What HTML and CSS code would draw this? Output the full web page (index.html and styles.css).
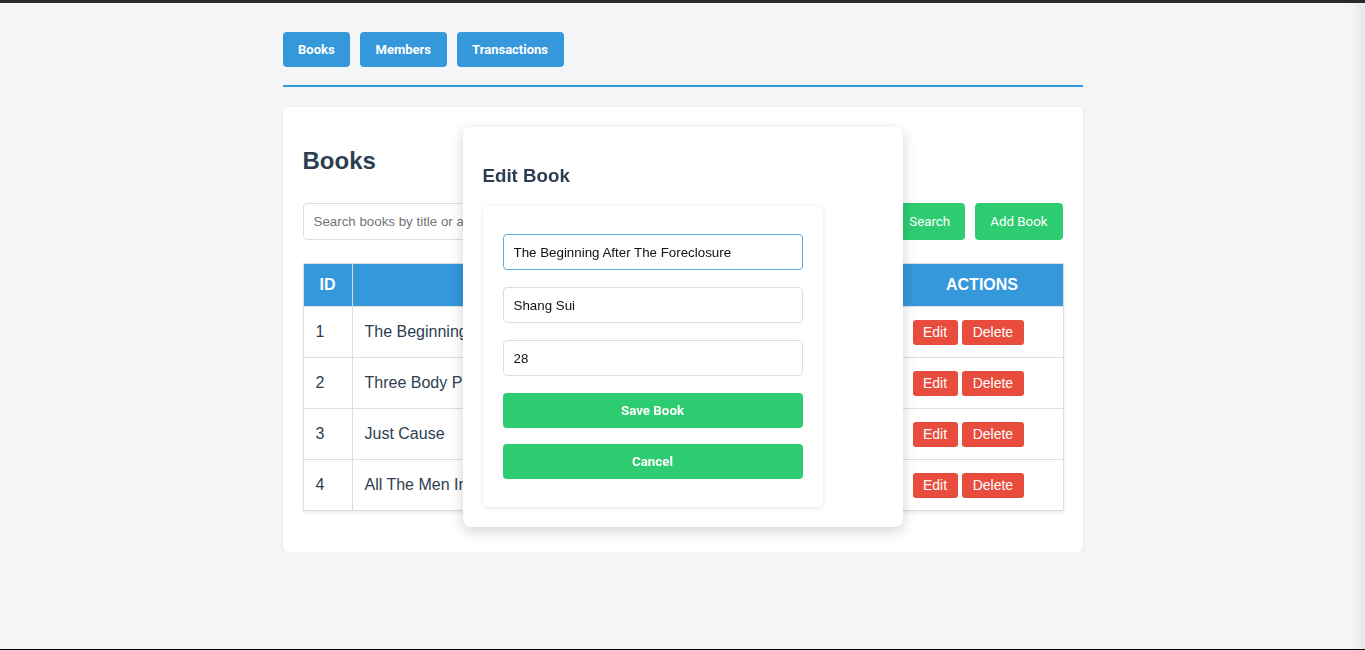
FILE: index.html
```html
<!DOCTYPE html>
<html lang="en">
<head>
<meta charset="utf-8">
<title>Library</title>
<link rel="stylesheet" href="styles.css">
</head>
<body>
<div class="topbar"></div>
<div class="container">
  <nav class="nav">
    <button class="nav-btn">Books</button>
    <button class="nav-btn">Members</button>
    <button class="nav-btn">Transactions</button>
  </nav>
  <section class="card">
    <h2 class="card-title">Books</h2>
    <div class="search-row">
      <input class="search-input" type="text" placeholder="Search books by title or author...">
      <button class="green-btn">Search</button>
      <button class="green-btn">Add Book</button>
    </div>
    <table class="books">
      <colgroup>
        <col class="c-id"><col class="c-title"><col class="c-author"><col class="c-qty"><col class="c-actions">
      </colgroup>
      <thead>
        <tr><th>ID</th><th>TITLE</th><th>AUTHOR</th><th>QTY</th><th>ACTIONS</th></tr>
      </thead>
      <tbody>
        <tr><td>1</td><td>The Beginning After The Foreclosure</td><td>Shang Sui</td><td>28</td><td><div class="acts"><button class="red-btn">Edit</button><button class="red-btn">Delete</button></div></td></tr>
        <tr><td>2</td><td>Three Body Problem</td><td>Liu Cixin</td><td>12</td><td><div class="acts"><button class="red-btn">Edit</button><button class="red-btn">Delete</button></div></td></tr>
        <tr><td>3</td><td>Just Cause</td><td>Mo Yan</td><td>7</td><td><div class="acts"><button class="red-btn">Edit</button><button class="red-btn">Delete</button></div></td></tr>
        <tr><td>4</td><td>All The Men In The World</td><td>Yu Hua</td><td>5</td><td><div class="acts"><button class="red-btn">Edit</button><button class="red-btn">Delete</button></div></td></tr>
      </tbody>
    </table>
  </section>
</div>

<div class="modal">
  <h3 class="modal-title">Edit Book</h3>
  <form class="modal-form">
    <input class="field focused" type="text" value="The Beginning After The Foreclosure">
    <input class="field" type="text" value="Shang Sui">
    <input class="field" type="text" value="28">
    <button type="button" class="wide-btn save">Save Book</button>
    <button type="button" class="wide-btn cancel">Cancel</button>
  </form>
</div>
<div class="edge-shade"></div>
<div class="bottom-line"></div>
</body>
</html>
```

FILE: styles.css
```css
* { box-sizing: border-box; }

body {
  margin: 0;
  background: #f4f5f7;
  font-family: "Liberation Sans", Arial, sans-serif;
  color: #2c3e50;
}

.topbar {
  height: 3px;
  background: #2b2b2b;
}

.container {
  width: 800px;
  margin: 0 auto;
  padding-top: 29px;
}

.nav {
  display: flex;
  gap: 10px;
  padding-bottom: 18px;
  border-bottom: 2px solid #3498db;
  margin-bottom: 20px;
}

.nav-btn {
  height: 35px;
  padding: 0 15.5px;
  border: none;
  border-radius: 4px;
  background: #3498db;
  color: #fff;
  font-family: Roboto, "Liberation Sans", sans-serif;
  font-weight: 700;
  font-size: 13px;
}

.card {
  background: #fff;
  border-radius: 6px;
  padding: 20px 20px 20px;
  box-shadow: 0 1px 4px rgba(0, 0, 0, 0.06);
}

.card-title {
  font-size: 24px;
  font-weight: 700;
  margin: 20px 0 28px;
  color: #2c3e50;
}

.search-row {
  display: flex;
  gap: 10px;
  margin-bottom: 23px;
}

.search-input {
  flex: 1;
  height: 37px;
  padding: 0 10px;
  border: 1px solid #ddd;
  border-radius: 4px;
  font-family: "Liberation Sans", Arial, sans-serif;
  font-size: 13.33px;
  color: #333;
}
.search-input::placeholder { color: #757575; }

.green-btn {
  height: 37px;
  padding: 0 15px;
  border: none;
  border-radius: 4px;
  background: #2ecc71;
  color: #fff;
  font-family: Roboto, "Liberation Sans", sans-serif;
  font-size: 13.33px;
}

.books {
  width: 100%;
  border-collapse: collapse;
  border: 1px solid #ddd;
  box-shadow: 0 2px 3px rgba(0, 0, 0, 0.08);
  margin-bottom: 21px;
  table-layout: fixed;
}
.c-id { width: 49px; }
.c-title { width: 300px; }
.c-author { width: 150px; }
.c-qty { width: 99px; }
.c-actions { width: 162px; }

.books th {
  background: #3498db;
  color: #fff;
  font-size: 16px;
  font-weight: 700;
  height: 43px;
  padding: 0 12px;
  text-align: center;
  border: 1px solid #ddd;
  border-top: none;
}
.books td {
  height: 51px;
  padding: 0 12px;
  font-size: 16px;
  color: #2c3e50;
  border: 1px solid #ddd;
  white-space: nowrap;
  overflow: hidden;
}
.books td:last-child { border-left: none; padding-left: 11px; }

.acts {
  display: flex;
  gap: 4px;
}

.red-btn {
  height: 25px;
  padding: 0 10.5px;
  border: none;
  border-radius: 3px;
  background: #e74c3c;
  color: #fff;
  font-family: "Liberation Sans", Arial, sans-serif;
  font-size: 14px;
}
.red-btn + .red-btn { padding: 0 11px; }

.modal {
  position: fixed;
  top: 127px;
  left: 50%;
  width: 440px;
  height: 400px;
  margin-left: -220px;
  background: #fff;
  border-radius: 8px;
  padding: 20px;
  box-shadow: 0 4px 14px rgba(0, 0, 0, 0.18);
}

.modal-title {
  font-size: 18.72px;
  font-weight: 700;
  margin: 18px 0 19px;
  color: #2c3e50;
}

.modal-form {
  width: 340px;
  background: #fff;
  border-radius: 5px;
  padding: 28px 20px;
  box-shadow: 0 1px 5px rgba(0, 0, 0, 0.1);
  display: flex;
  flex-direction: column;
}

.field {
  height: 36px;
  padding: 0 10px;
  border: 1px solid #ddd;
  border-radius: 4px;
  font-family: "Liberation Sans", Arial, sans-serif;
  font-size: 13.33px;
  color: #111;
  margin-bottom: 17px;
}
.field.focused {
  border-color: #5aa9e0;
  outline: none;
}

.wide-btn {
  height: 35px;
  border: none;
  border-radius: 4px;
  background: #2ecc71;
  color: #fff;
  font-family: Roboto, "Liberation Sans", sans-serif;
  font-weight: 700;
  font-size: 13.33px;
}
.wide-btn.save { margin-bottom: 16px; }

.edge-shade {
  position: fixed;
  top: 3px;
  right: 0;
  width: 14px;
  bottom: 1px;
  background: linear-gradient(to right, rgba(0,0,0,0), rgba(0,0,0,0.06));
}

.bottom-line {
  position: fixed;
  left: 0;
  right: 0;
  bottom: 0;
  height: 1px;
  background: #000;
}
```
